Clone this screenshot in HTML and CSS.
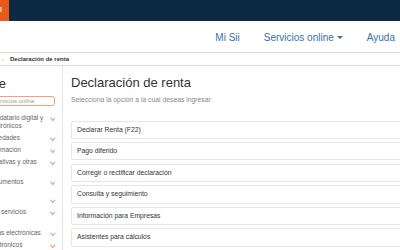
FILE: index.html
```html
<!DOCTYPE html>
<html lang="es">
<head>
<meta charset="utf-8">
<title>Declaración de renta</title>
<link rel="stylesheet" href="styles.css">
</head>
<body>
<header class="topbar">
  <div class="logo"><span class="logo-mark"></span></div>
</header>
<nav class="nav">
  <a class="nav-link">Mi Sii</a>
  <a class="nav-link">Servicios online <span class="caret"></span></a>
  <a class="nav-link">Ayuda</a>
</nav>
<div class="crumbs">
  <span class="crumb-sep">›</span>
  <span class="crumb-current">Declaración de renta</span>
</div>
<div class="layout">
  <aside class="side">
    <div class="side-inner">
      <h2 class="side-title">Servicios online</h2>
      <div class="search">Buscar en servicios online</div>
      <ul class="side-list">
        <li class="side-item"><span class="side-text">Mandatario digital y electrónicos</span><span class="chev"></span></li>
        <li class="side-item"><span class="side-text">Novedades</span><span class="chev"></span></li>
        <li class="side-item"><span class="side-text">Información</span><span class="chev"></span></li>
        <li class="side-item"><span class="side-text">Iniciativas y otras</span><span class="chev"></span></li>
        <li class="side-item sp8"><span class="side-text">Documentos</span><span class="chev"></span></li>
        <li class="side-item sp6"><span class="side-text">IVA</span><span class="chev"></span></li>
        <li class="side-item"><span class="side-text">Más servicios</span><span class="chev"></span></li>
        <li class="side-item sp9"><span class="side-text">Guías electrónicas</span><span class="chev"></span></li>
        <li class="side-item"><span class="side-text">Electrónicos</span><span class="chev"></span></li>
      </ul>
    </div>
  </aside>
  <main class="main">
    <h1 class="title">Declaración de renta</h1>
    <p class="subtitle">Selecciona la opción a la cual deseas ingresar:</p>
    <ul class="options">
      <li class="option">Declarar Renta (F22)</li>
      <li class="option">Pago diferido</li>
      <li class="option">Corregir o rectificar declaración</li>
      <li class="option">Consulta y seguimiento</li>
      <li class="option">Información para Empresas</li>
      <li class="option">Asistentes para cálculos</li>
    </ul>
  </main>
</div>
</body>
</html>
```
FILE: styles.css
```css
* { box-sizing: border-box; }
html, body { margin: 0; padding: 0; }
body {
  width: 400px;
  height: 250px;
  overflow: hidden;
  background: #fff;
  font-family: "Liberation Sans", Arial, sans-serif;
  color: #333;
}
ul { list-style: none; margin: 0; padding: 0; }

.topbar {
  height: 21px;
  background: #0c2a44;
  display: flex;
}
.logo {
  width: 9px;
  height: 21px;
  background: #e85a1c;
  position: relative;
}
.logo-mark {
  position: absolute;
  left: 0;
  top: 7px;
  width: 2px;
  height: 5px;
  background: #f6b48c;
}

.nav {
  height: 32px;
  border-bottom: 1px solid #dcdcdc;
  display: flex;
  justify-content: flex-end;
  align-items: center;
  gap: 24px;
  padding-right: 5px;
  padding-top: 2px;
}
.nav-link {
  font-size: 10px;
  color: #3470a8;
  display: flex;
  align-items: center;
  gap: 2px;
}
.caret {
  width: 0;
  height: 0;
  border-left: 3px solid transparent;
  border-right: 3px solid transparent;
  border-top: 3.5px solid #3470a8;
  margin-left: 1px;
}

.crumbs {
  height: 13px;
  border-bottom: 1px solid #dcdcdc;
  display: flex;
  align-items: center;
  gap: 6px;
  padding-left: 2px;
  font-size: 6px;
}
.crumb-sep { color: #bbb; }
.crumb-current { color: #333; font-weight: bold; }

.layout {
  display: flex;
  height: 184px;
}
.side {
  width: 63px;
  flex: none;
  border-right: 1px solid #e4e4e4;
  overflow: hidden;
}
.side-inner {
  margin-left: -13px;
  width: 69px;
  padding-top: 10px;
}
.side-title {
  margin: 0 0 4px -72px;
  font-size: 13px;
  line-height: 16px;
  font-weight: normal;
  color: #333;
  white-space: nowrap;
}
.search {
  margin-left: -27px;
  width: 95px;
  height: 10px;
  border: 1px solid #eba47a;
  border-radius: 3px;
  padding-left: 4px;
  font-size: 6px;
  line-height: 8px;
  color: #9a9a9a;
  white-space: nowrap;
  margin-bottom: 8px;
}
.side-list {
  display: flex;
  flex-direction: column;
  gap: 4px;
}
.side-item {
  display: flex;
  align-items: flex-start;
  justify-content: space-between;
  font-size: 6.5px;
  line-height: 8px;
  color: #666;
}
.side-item.sp8 { margin-top: 8px; }
.side-item.sp6 { margin-top: 6px; }
.side-item.sp9 { margin-top: 9px; }
.side-text {
  width: 60px;
  white-space: normal;
}
.chev {
  width: 3.5px;
  height: 3.5px;
  border-right: 1px solid #e9926a;
  border-bottom: 1px solid #e9926a;
  transform: rotate(45deg);
  margin: 1.5px 2px 0 0;
  flex: none;
}

.main {
  flex: 1;
  padding: 9px 0 0 8px;
  min-width: 0;
}
.title {
  margin: 0;
  font-size: 13px;
  line-height: 16px;
  font-weight: normal;
  color: #333;
  white-space: nowrap;
}
.subtitle {
  margin: 4px 0 0;
  font-size: 6.8px;
  line-height: 9px;
  color: #8a8a8a;
  white-space: nowrap;
}
.options {
  margin-top: 16.5px;
  display: flex;
  flex-direction: column;
  gap: 3.2px;
  margin-right: -10px;
}
.option {
  height: 18.4px;
  border: 1px solid #e6e6e6;
  border-radius: 2px;
  padding-left: 5px;
  font-size: 6.8px;
  line-height: 16.4px;
  color: #333;
  white-space: nowrap;
}
```
